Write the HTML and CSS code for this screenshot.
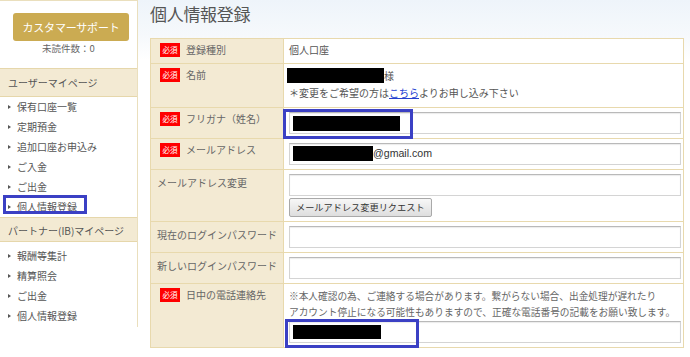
FILE: index.html
```html
<!DOCTYPE html>
<html lang="ja">
<head>
  <meta charset="UTF-8">
  <title>個人情報登録</title>
  <link rel="stylesheet" href="styles.css">
</head>
<body>

  <div class="page">
    <div class="side">
      <div class="support">
        <a class="support-btn">カスタマーサポート</a>
        <p class="unread">未読件数：0</p>
      </div>

      <h3 class="side-head">ユーザーマイページ</h3>
      <ul class="side-menu">
        <li>保有口座一覧</li>
        <li>定期預金</li>
        <li>追加口座お申込み</li>
        <li>ご入金</li>
        <li>ご出金</li>
        <li class="current">個人情報登録<span class="mark side-mark"></span></li>
      </ul>

      <h3 class="side-head ib-head">パートナー(IB)マイページ</h3>
      <ul class="side-menu ib-menu">
        <li>報酬等集計</li>
        <li>精算照会</li>
        <li>ご出金</li>
        <li>個人情報登録</li>
      </ul>
    </div>

    <div class="main">
      <h1 class="title">個人情報登録</h1>

      <table class="form">
        <colgroup>
          <col class="col-label">
          <col>
        </colgroup>
        <tr class="row-type">
          <th><span class="req">必須</span>登録種別</th>
          <td>個人口座</td>
        </tr>
        <tr class="row-name">
          <th><span class="req">必須</span>名前</th>
          <td>
            <div class="name-line"><span class="redact name-redact"></span>様</div>
            <p class="note">＊変更をご希望の方は<a class="link">こちら</a>よりお申し込み下さい</p>
          </td>
        </tr>
        <tr>
          <th><span class="req">必須</span>フリガナ（姓名）</th>
          <td>
            <div class="field"><span class="redact kana-redact"></span><span class="mark kana-mark"></span></div>
          </td>
        </tr>
        <tr>
          <th><span class="req">必須</span>メールアドレス</th>
          <td>
            <div class="field"><span class="redact mail-redact"></span><span class="mail-domain">@gmail.com</span></div>
          </td>
        </tr>
        <tr>
          <th class="plain">メールアドレス変更</th>
          <td>
            <div class="field"></div>
            <button class="req-btn">メールアドレス変更リクエスト</button>
          </td>
        </tr>
        <tr>
          <th class="plain">現在のログインパスワード</th>
          <td><div class="field"></div></td>
        </tr>
        <tr>
          <th class="plain">新しいログインパスワード</th>
          <td><div class="field"></div></td>
        </tr>
        <tr>
          <th><span class="req">必須</span>日中の電話連絡先</th>
          <td>
            <p class="tel-note">※本人確認の為、ご連絡する場合があります。繋がらない場合、出金処理が遅れたり<br>アカウント停止になる可能性もありますので、正確な電話番号の記載をお願い致します。</p>
            <div class="field tel-field"><span class="redact tel-redact"></span><span class="mark tel-mark"></span></div>
          </td>
        </tr>
      </table>
    </div>
  </div>

</body>
</html>
```

FILE: styles.css
```css
body {
  margin: 0;
  font-family: "Noto Sans CJK JP", "Noto Sans", sans-serif;
  color: #555;
  background-color: #fff;
}

.page {
  display: flex;
  align-items: flex-start;
}

/* sidebar */
.side {
  width: 137px;
  flex-shrink: 0;
  border-top: 1px solid #eadfbd;
  border-right: 1px solid #eadfbd;
  padding-bottom: 1px;
}

.support {
  padding: 12px 0 14px;
  text-align: center;
}

.support-btn {
  display: block;
  margin: 0 8px 0 13px;
  height: 28px;
  line-height: 28px;
  background-color: #cbab52;
  border-radius: 3px;
  color: #fff;
  font-size: 11px;
  letter-spacing: -0.2px;
}

.unread {
  margin: 1px 0 0;
  line-height: 12px;
  font-size: 9.5px;
  color: #666;
}

.side-head {
  margin: 0;
  height: 27px;
  line-height: 27px;
  padding-left: 8px;
  background-color: #f3ead3;
  border-top: 1px solid #e6d7ab;
  border-bottom: 1px solid #e6d7ab;
  font-size: 10px;
  font-weight: normal;
  color: #555;
}

.ib-head {
  height: 21px;
  line-height: 21px;
  padding-top: 2px;
}

.side-menu {
  list-style: none;
  margin: 0;
  padding: 0;
}

.ib-menu {
  padding-top: 4px;
}

.side-menu li {
  position: relative;
  height: 20px;
  line-height: 20px;
  padding-left: 17px;
  font-size: 10px;
  color: #555;
}

.side-menu li::before {
  content: "";
  position: absolute;
  left: 8px;
  top: 8px;
  border-left: 3px solid #555;
  border-top: 2.5px solid transparent;
  border-bottom: 2.5px solid transparent;
}

/* blue annotation boxes */
.mark {
  position: absolute;
  box-sizing: border-box;
  border: 3px solid #3b40c4;
}

.side-mark {
  left: 3px;
  top: -2px;
  width: 84px;
  height: 19px;
}

/* main */
.main {
  flex: 1;
  padding: 0 6px 0 12px;
  background: linear-gradient(to bottom, #eef4fa 0, #f6f9fc 36px, #fff 60px);
}

.title {
  margin: 0;
  padding-top: 4px;
  height: 34px;
  line-height: 20px;
  font-size: 17px;
  font-weight: normal;
  color: #555;
  letter-spacing: -0.3px;
}

.form {
  width: 534px;
  table-layout: fixed;
  border-collapse: collapse;
  border: 1px solid #e4d19b;
  background-color: #fff;
}

.col-label {
  width: 133px;
}

.form th,
.form td {
  border: 1px solid #e8d9ad;
  vertical-align: top;
  font-size: 10px;
  line-height: 14px;
}

.form th {
  background-color: #f3ead3;
  text-align: left;
  font-weight: normal;
  color: #666;
  padding: 4px 4px 4px 4px;
  white-space: nowrap;
}

.form th.plain {
  padding-left: 6px;
  padding-top: 6px;
}

.form td {
  padding: 4px 2px 4px 5px;
  color: #555;
}

.row-type td,
.row-name td {
  padding-bottom: 6px;
}

.req {
  display: inline-block;
  width: 20px;
  height: 14px;
  line-height: 14px;
  margin: 0 6px 0 5px;
  background-color: #f00;
  color: #fff;
  font-size: 7.5px;
  text-align: center;
  vertical-align: top;
}

.redact {
  display: inline-block;
  background-color: #000;
  vertical-align: top;
}

.name-line {
  line-height: 15px;
}

.name-redact {
  width: 97px;
  height: 15px;
  margin-left: -2px;
}

.note {
  margin: 3px 0 1px;
  line-height: 14px;
}

.link {
  color: #2340d0;
  text-decoration: underline;
}

.field {
  position: relative;
  box-sizing: border-box;
  height: 22px;
  padding: 2px 3px;
  border: 1px solid #d4d4d4;
  border-top-color: #b9b9b9;
  box-shadow: inset 0 1px 1px rgba(0, 0, 0, 0.08);
  background-color: #fff;
}

.kana-redact {
  width: 107px;
  height: 15px;
  margin-top: 1px;
}

.kana-mark {
  left: -7px;
  top: -4px;
  width: 130px;
  height: 30px;
}

.mail-redact {
  width: 80px;
  height: 15px;
}

.mail-domain {
  font-family: "Liberation Sans", Arial, sans-serif;
  font-size: 10.6px;
  line-height: 15px;
  color: #333;
  vertical-align: top;
}

.req-btn {
  display: block;
  margin-top: 2px;
  height: 19px;
  padding: 0 6px;
  border: 1px solid #a9a9a9;
  border-radius: 2px;
  background: linear-gradient(to bottom, #f7f7f7, #dedede);
  font-family: "Noto Sans CJK JP", sans-serif;
  font-size: 9.2px;
  line-height: 17px;
  color: #333;
}

.tel-note {
  margin: 0 0 1px;
  line-height: 16px;
  font-size: 9.7px;
  white-space: nowrap;
  color: #666;
}

.tel-redact {
  width: 88px;
  height: 14px;
  margin-top: 1px;
}

.tel-mark {
  left: -5px;
  top: -3px;
  width: 134px;
  height: 29px;
}
```
